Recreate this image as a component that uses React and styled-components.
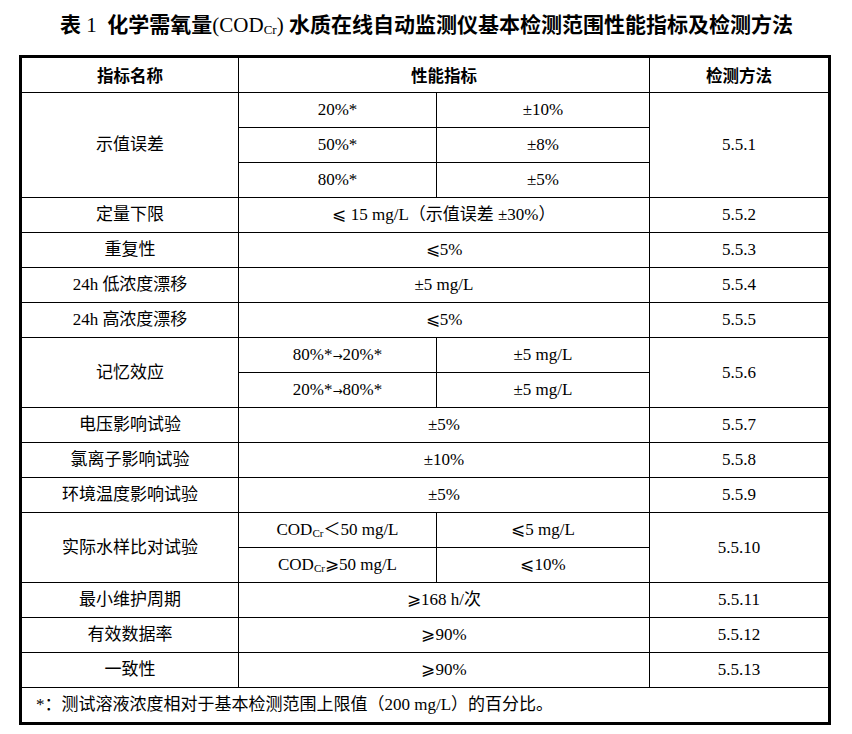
import React from "react";
import styled, { createGlobalStyle } from "styled-components";

const GlobalStyle = createGlobalStyle`
  html, body {
    margin: 0;
    padding: 0;
    background: #fff;
  }
  body {
    font-family: "Liberation Serif", "Noto Sans CJK SC", serif;
    color: #000;
  }
`;

const Page = styled.div`
  width: 852px;
  padding: 13px 0 0 19px;
  box-sizing: border-box;
`;

const Title = styled.h1`
  width: 809px;
  margin: 0 0 18px;
  padding-left: 6px;
  box-sizing: border-box;
  text-align: center;
  font-family: "Liberation Serif", "Noto Sans CJK SC", sans-serif;
  font-size: 21px;
  line-height: 24px;
  font-weight: 700;
`;

// latin bits of the title are set in plain roman
const Roman = styled.span`
  font-weight: 400;
`;

const Sub = styled.sub`
  font-size: ${(p) => p.$size || 11}px;
  vertical-align: -2px;
  line-height: 0;
`;

const Arrow = styled.span`
  font-family: "DejaVu Sans", sans-serif;
  font-size: 12px;
`;

const Table = styled.table`
  width: 809px;
  border-collapse: collapse;
  table-layout: fixed;
  border: 3px solid #000;
`;

const Cell = styled.td`
  border: 1px solid #000;
  height: 34px;
  padding: 0;
  text-align: ${(p) => (p.$left ? "left" : "center")};
  padding-left: ${(p) => (p.$left ? "14px" : "0")};
  vertical-align: middle;
  font-size: 17px;
  line-height: 20px;
  white-space: nowrap;
`;

const HeadCell = styled(Cell).attrs({ as: "th" })`
  font-family: "Noto Sans CJK SC", sans-serif;
  font-weight: 700;
  font-size: 16.5px;
`;

const Cr = () => <Sub>Cr</Sub>;

export default function App() {
  return (
    <Page>
      <GlobalStyle />
      <Title>
        表 <Roman>1</Roman>&nbsp; 化学需氧量<Roman>(COD<Sub $size={13}>Cr</Sub>)</Roman> 水质在线自动监测仪基本检测范围性能指标及检测方法
      </Title>
      <Table>
        <colgroup>
          <col style={{ width: 218 }} />
          <col style={{ width: 198 }} />
          <col style={{ width: 213 }} />
          <col style={{ width: 180 }} />
        </colgroup>
        <tbody>
          <tr>
            <HeadCell>指标名称</HeadCell>
            <HeadCell colSpan={2}>性能指标</HeadCell>
            <HeadCell>检测方法</HeadCell>
          </tr>
          <tr>
            <Cell rowSpan={3}>示值误差</Cell>
            <Cell>20%*</Cell>
            <Cell>±10%</Cell>
            <Cell rowSpan={3}>5.5.1</Cell>
          </tr>
          <tr>
            <Cell>50%*</Cell>
            <Cell>±8%</Cell>
          </tr>
          <tr>
            <Cell>80%*</Cell>
            <Cell>±5%</Cell>
          </tr>
          <tr>
            <Cell>定量下限</Cell>
            <Cell colSpan={2}>⩽ 15 mg/L（示值误差 ±30%）</Cell>
            <Cell>5.5.2</Cell>
          </tr>
          <tr>
            <Cell>重复性</Cell>
            <Cell colSpan={2}>⩽5%</Cell>
            <Cell>5.5.3</Cell>
          </tr>
          <tr>
            <Cell>24h 低浓度漂移</Cell>
            <Cell colSpan={2}>±5 mg/L</Cell>
            <Cell>5.5.4</Cell>
          </tr>
          <tr>
            <Cell>24h 高浓度漂移</Cell>
            <Cell colSpan={2}>⩽5%</Cell>
            <Cell>5.5.5</Cell>
          </tr>
          <tr>
            <Cell rowSpan={2}>记忆效应</Cell>
            <Cell>
              80%*<Arrow>→</Arrow>20%*
            </Cell>
            <Cell>±5 mg/L</Cell>
            <Cell rowSpan={2}>5.5.6</Cell>
          </tr>
          <tr>
            <Cell>
              20%*<Arrow>→</Arrow>80%*
            </Cell>
            <Cell>±5 mg/L</Cell>
          </tr>
          <tr>
            <Cell>电压影响试验</Cell>
            <Cell colSpan={2}>±5%</Cell>
            <Cell>5.5.7</Cell>
          </tr>
          <tr>
            <Cell>氯离子影响试验</Cell>
            <Cell colSpan={2}>±10%</Cell>
            <Cell>5.5.8</Cell>
          </tr>
          <tr>
            <Cell>环境温度影响试验</Cell>
            <Cell colSpan={2}>±5%</Cell>
            <Cell>5.5.9</Cell>
          </tr>
          <tr>
            <Cell rowSpan={2}>实际水样比对试验</Cell>
            <Cell>
              COD<Cr />＜50 mg/L
            </Cell>
            <Cell>⩽5 mg/L</Cell>
            <Cell rowSpan={2}>5.5.10</Cell>
          </tr>
          <tr>
            <Cell>
              COD<Cr />⩾50 mg/L
            </Cell>
            <Cell>⩽10%</Cell>
          </tr>
          <tr>
            <Cell>最小维护周期</Cell>
            <Cell colSpan={2}>⩾168 h/次</Cell>
            <Cell>5.5.11</Cell>
          </tr>
          <tr>
            <Cell>有效数据率</Cell>
            <Cell colSpan={2}>⩾90%</Cell>
            <Cell>5.5.12</Cell>
          </tr>
          <tr>
            <Cell>一致性</Cell>
            <Cell colSpan={2}>⩾90%</Cell>
            <Cell>5.5.13</Cell>
          </tr>
          <tr>
            <Cell colSpan={4} $left>
              *：测试溶液浓度相对于基本检测范围上限值（200 mg/L）的百分比。
            </Cell>
          </tr>
        </tbody>
      </Table>
    </Page>
  );
}
